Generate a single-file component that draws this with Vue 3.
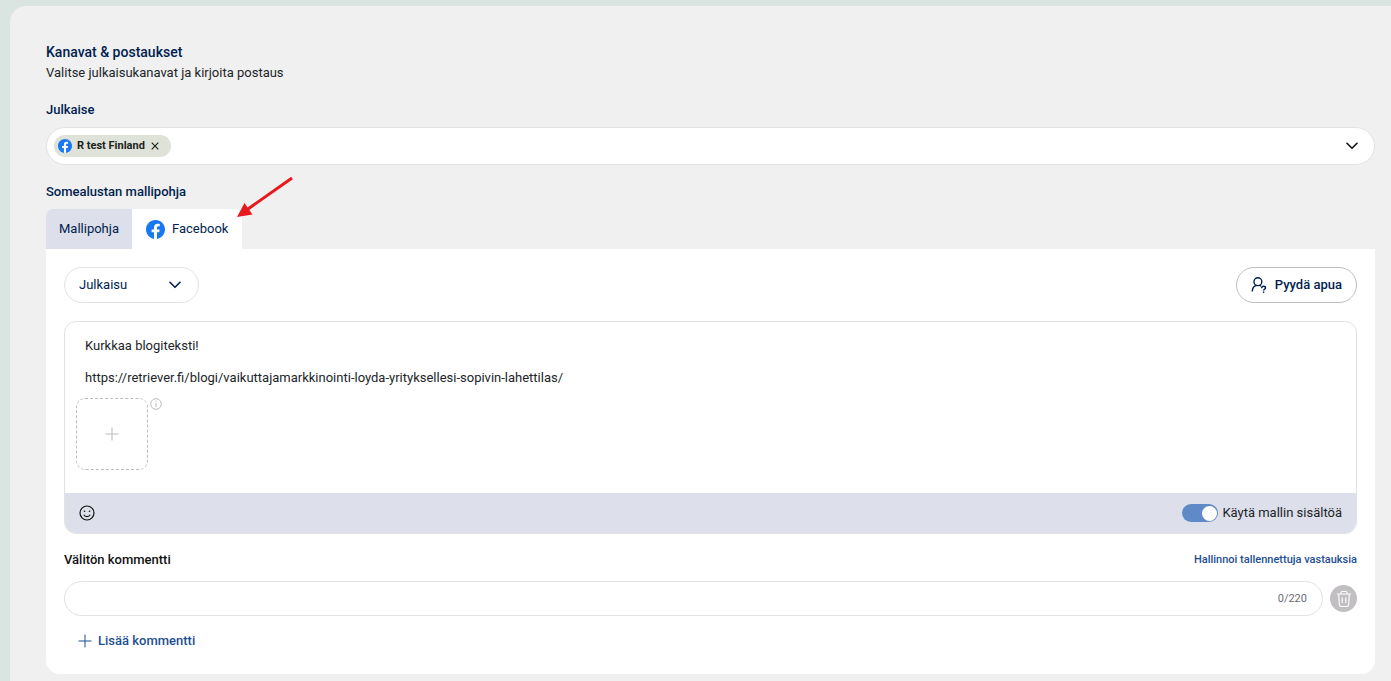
<script setup>
import { ref } from 'vue'

const fbPath =
  'M24 12.073c0-6.627-5.373-12-12-12s-12 5.373-12 12c0 5.99 4.388 10.954 10.125 11.854v-8.385H7.078v-3.47h3.047V9.43c0-3.007 1.792-4.669 4.533-4.669 1.312 0 2.686.235 2.686.235v2.953H15.83c-1.491 0-1.956.925-1.956 1.874v2.25h3.328l-.532 3.47h-2.796v8.385C19.612 23.027 24 18.062 24 12.073z'

const channels = ref(['R test Finland'])
const query = ref('')
const activeTab = ref('facebook')
const postType = ref('Julkaisu')
const post = ref(
  'Kurkkaa blogiteksti!\n\nhttps://retriever.fi/blogi/vaikuttajamarkkinointi-loyda-yrityksellesi-sopivin-lahettilas/'
)
const useTemplate = ref(true)
const comment = ref('')

function removeChannel(name) {
  channels.value = channels.value.filter((c) => c !== name)
}
</script>

<template>
  <div class="page">
    <main class="panel">
      <header class="head">
        <h1>Kanavat &amp; postaukset</h1>
        <p>Valitse julkaisukanavat ja kirjoita postaus</p>
      </header>

      <label class="label" for="channels">Julkaise</label>
      <div class="multiselect">
        <span v-for="c in channels" :key="c" class="chip">
          <svg class="fb-small" viewBox="0 0 24 24" aria-hidden="true">
            <circle cx="12" cy="12" r="11" fill="#fff" />
            <path :d="fbPath" fill="#1877f2" />
          </svg>
          <span>{{ c }}</span>
          <button type="button" class="chip-remove" aria-label="Poista" @click="removeChannel(c)">
            <svg viewBox="0 0 8 8" aria-hidden="true"><path d="M.7.7l6.6 6.6M7.3.7L.7 7.3" /></svg>
          </button>
        </span>
        <input id="channels" v-model="query" type="text" class="channel-input" />
        <button type="button" class="open" aria-label="Avaa">
          <svg class="chevron" viewBox="0 0 12 8" aria-hidden="true"><path d="M1 1.3l5 5 5-5" /></svg>
        </button>
      </div>

      <h2 class="label template-label">Somealustan mallipohja</h2>
      <div class="tabs" role="tablist">
        <button
          type="button"
          role="tab"
          class="tab"
          :class="{ active: activeTab === 'template' }"
          :aria-selected="activeTab === 'template'"
          @click="activeTab = 'template'"
        >
          Mallipohja
        </button>
        <div class="tab-wrap">
          <button
            type="button"
            role="tab"
            class="tab"
            :class="{ active: activeTab === 'facebook' }"
            :aria-selected="activeTab === 'facebook'"
            @click="activeTab = 'facebook'"
          >
            <svg class="fb" viewBox="0 0 24 24" aria-hidden="true">
              <circle cx="12" cy="12" r="11" fill="#fff" />
              <path :d="fbPath" fill="#1877f2" />
            </svg>
            Facebook
          </button>
          <svg class="arrow" viewBox="0 0 58 44" aria-hidden="true">
            <path d="M56 2L12 33" stroke="#e8191c" stroke-width="3" fill="none" />
            <path d="M1 41L8.500 27L16.500 38.500Z" fill="#e8191c" />
          </svg>
        </div>
      </div>

      <section class="card">
        <div class="toolbar">
          <div class="select">
            <select v-model="postType" aria-label="Julkaisun tyyppi">
              <option>Julkaisu</option>
            </select>
            <svg class="chevron" viewBox="0 0 12 8" aria-hidden="true"><path d="M1 1.300l5 5 5-5" /></svg>
          </div>
          <button type="button" class="help">
            <svg viewBox="0 0 16 16" aria-hidden="true">
              <circle cx="6.900" cy="4.700" r="3.900" />
              <path d="M1.300 14.600c0-3.300 1.500-5.600 4.300-6.200M8.400 8.300c.7.200 1.200.5 1.600 1" />
              <path d="M10.700 11.200c0-1.200.8-1.900 1.900-1.900s1.900.7 1.900 1.600c0 1.300-1.900 1.200-1.900 2.700" />
              <path d="M12.600 14.400v1.500" />
            </svg>
            Pyydä apua
          </button>
        </div>

        <div class="editor">
          <textarea v-model="post" rows="4" aria-label="Postauksen teksti"></textarea>
          <div class="media">
            <button type="button" class="add-media" aria-label="Lisää kuva">
              <svg viewBox="0 0 14 14" aria-hidden="true"><path d="M7 .5v13M.5 7h13" /></svg>
            </button>
            <svg class="info" viewBox="0 0 12 12" aria-hidden="true">
              <circle cx="6" cy="6" r="5.300" />
              <path d="M6 5v4M6 3v1" />
            </svg>
          </div>
          <div class="editor-bar">
            <button type="button" class="emoji" aria-label="Emoji">
              <svg viewBox="0 0 16 16" aria-hidden="true">
                <circle cx="8" cy="8" r="7" />
                <path d="M4.800 9.800c.7 1.200 1.800 1.800 3.200 1.800s2.500-.6 3.200-1.800" />
                <circle class="eye" cx="5.500" cy="6.200" r=".8" />
                <circle class="eye" cx="10.500" cy="6.200" r=".8" />
              </svg>
            </button>
            <label class="switch">
              <input v-model="useTemplate" type="checkbox" />
              Käytä mallin sisältöä
            </label>
          </div>
        </div>

        <div class="comment-head">
          <label for="comment">Välitön kommentti</label>
          <a href="#">Hallinnoi tallennettuja vastauksia</a>
        </div>
        <div class="comment-row">
          <div class="comment-field">
            <input id="comment" v-model="comment" type="text" maxlength="220" />
            <span>{{ comment.length }}/220</span>
          </div>
          <button type="button" class="delete" aria-label="Poista kommentti" @click="comment = ''">
            <svg viewBox="0 0 16 18" aria-hidden="true">
              <path d="M1 4h14M5 4V2.500Q5 1.500 6 1.500h4q1 0 1 1V4M2.700 4l.6 10.500q.1 2 2 2h5.400q1.900 0 2-2L13.300 4M6.200 7.500v5.500M9.800 7.500v5.500" />
            </svg>
          </button>
        </div>
        <button type="button" class="add-comment">
          <svg viewBox="0 0 14 14" aria-hidden="true"><path d="M7 .5v13M.5 7h13" /></svg>
          Lisää kommentti
        </button>
      </section>
    </main>
  </div>
</template>

<style>
body {
  margin: 0;
  background: #dae4e0;
}
</style>

<style scoped>
.page {
  box-sizing: border-box;
  min-height: 100vh;
  padding: 6px 0 0 10px;
  display: flex;
  font-family: Roboto, 'Liberation Sans', sans-serif;
  font-size: 13px;
  line-height: 20px;
  color: #212529;
}
.page *,
.page *::before {
  box-sizing: border-box;
}
button,
input,
select,
textarea {
  font: inherit;
  color: inherit;
  margin: 0;
  padding: 0;
  border: 0;
  background: none;
  outline: none;
}
button {
  cursor: pointer;
}
svg {
  display: block;
  flex: none;
  fill: none;
  stroke-linecap: butt;
}
.panel {
  flex: 1;
  min-width: 0;
  padding: 36px 16px 7px 36px;
  border-top-left-radius: 16px;
  background: #f0f0f0;
}
.head h1 {
  margin: 0 0 1px;
  font-size: 14px;
  font-weight: 500;
  line-height: 20px;
  color: #001e4f;
}
.head p {
  margin: 0 0 17px;
}
.label {
  display: block;
  margin: 0 0 7px;
  font-size: 13px;
  font-weight: 500;
  line-height: 20px;
  color: #001e4f;
}
.multiselect {
  display: flex;
  align-items: center;
  height: 38px;
  padding: 0 16px 0 7px;
  border: 1px solid #e2e2e2;
  border-radius: 19px;
  background: #fff;
}
.chip {
  display: flex;
  align-items: center;
  height: 22px;
  padding: 0 12px 0 4px;
  border-radius: 11px;
  background: #dfe2d9;
  font-size: 11px;
  font-weight: 700;
  color: #1c2420;
}
.fb-small {
  width: 14px;
  height: 14px;
  margin-right: 5px;
}
.chip-remove {
  margin-left: 6px;
}
.chip-remove svg {
  width: 8px;
  height: 8px;
  stroke: #222;
  stroke-width: 1.2;
}
.channel-input {
  flex: 1;
  min-width: 0;
}
.chevron {
  width: 12px;
  height: 8px;
  stroke: #111;
  stroke-width: 1.6;
  stroke-linejoin: round;
  stroke-linecap: round;
}
.template-label {
  margin-top: 17px;
}
.tabs {
  display: flex;
}
.tab {
  display: flex;
  align-items: center;
  gap: 7px;
  height: 40px;
  padding: 0 13px;
  background: #dddfea;
  color: #001e4f;
}
.tab:first-child {
  border-top-left-radius: 7px;
}
.tab-wrap {
  position: relative;
}
.tab-wrap .tab {
  padding: 0 14px;
  border-radius: 0 7px 0 0;
}
.tab.active {
  background: #fff;
}
.fb {
  width: 19px;
  height: 19px;
}
.arrow {
  position: absolute;
  left: 104px;
  top: -33px;
  width: 58px;
  height: 44px;
  pointer-events: none;
}
.card {
  padding: 18px 18px 23px;
  border-radius: 0 0 14px 14px;
  background: #fff;
}
.toolbar {
  display: flex;
  justify-content: space-between;
  margin-bottom: 18px;
}
.select {
  position: relative;
  width: 135px;
}
.select select {
  appearance: none;
  width: 100%;
  height: 36px;
  padding: 0 36px 0 14px;
  border: 1px solid #e2e2e2;
  border-radius: 18px;
  background: #fff;
  color: #001e4f;
}
.select .chevron {
  position: absolute;
  right: 18px;
  top: 14px;
  stroke: #001e4f;
  pointer-events: none;
}
.help {
  display: flex;
  align-items: center;
  gap: 8px;
  height: 36px;
  padding: 0 14px;
  border: 1px solid #bdbdbd;
  border-radius: 18px;
  font-weight: 500;
  color: #001e4f;
}
.help svg {
  width: 16px;
  height: 16px;
  stroke: #001e4f;
  stroke-width: 1.4;
}
.editor {
  border: 1px solid #e2e2e2;
  border-radius: 12px;
  overflow: hidden;
}
.editor textarea {
  display: block;
  width: 100%;
  height: 76px;
  padding: 16px 20px 0;
  line-height: 16px;
  resize: none;
  overflow: hidden;
}
.media {
  display: flex;
  gap: 2px;
  padding: 0 11px 23px;
}
.add-media {
  display: flex;
  align-items: center;
  justify-content: center;
  width: 72px;
  height: 72px;
  border: 1px dashed #bbb;
  border-radius: 9px;
}
.add-media svg {
  width: 14px;
  height: 14px;
  stroke: #bbb;
  stroke-width: 1;
}
.info {
  width: 12px;
  height: 12px;
  stroke: #bbb;
  stroke-width: 1;
}
.editor-bar {
  display: flex;
  align-items: center;
  justify-content: space-between;
  height: 40px;
  padding: 0 14px;
  background: #dddfea;
}
.emoji svg {
  width: 16px;
  height: 16px;
  stroke: #111;
  stroke-width: 1.2;
  stroke-linejoin: round;
}
.emoji .eye {
  fill: #111;
  stroke: none;
}
.switch {
  display: flex;
  align-items: center;
  gap: 4px;
}
.switch input {
  appearance: none;
  display: flex;
  align-items: center;
  width: 36px;
  height: 18px;
  padding: 0 1px;
  border-radius: 9px;
  background: #a9adb8;
}
.switch input::before {
  content: '';
  width: 15px;
  height: 15px;
  border-radius: 50%;
  background: #fff;
}
.switch input:checked {
  justify-content: flex-end;
  background: #5f8ac7;
}
.comment-head {
  display: flex;
  align-items: center;
  justify-content: space-between;
  margin: 16px 0 11px;
}
.comment-head label {
  font-weight: 500;
  color: #111;
}
.comment-head a {
  font-size: 11px;
  font-weight: 500;
  color: #1d4f91;
  text-decoration: none;
}
.comment-row {
  display: flex;
  align-items: center;
  gap: 7px;
}
.comment-field {
  flex: 1;
  display: flex;
  align-items: center;
  height: 35px;
  padding: 0 15px;
  border: 1px solid #e2e2e2;
  border-radius: 18px;
}
.comment-field input {
  flex: 1;
  min-width: 0;
}
.comment-field span {
  font-size: 11px;
  color: #6c6c74;
}
.delete {
  display: flex;
  align-items: center;
  justify-content: center;
  width: 27px;
  height: 27px;
  border-radius: 50%;
  background: #c2bfc2;
}
.delete svg {
  width: 16px;
  height: 18px;
  stroke: #fff;
  stroke-width: 1.1;
}
.add-comment {
  display: flex;
  align-items: center;
  gap: 6px;
  margin: 15px 0 0 14px;
  font-weight: 500;
  color: #1d4f91;
}
.add-comment svg {
  width: 14px;
  height: 14px;
  stroke: #1d4f91;
  stroke-width: 1;
}
</style>
